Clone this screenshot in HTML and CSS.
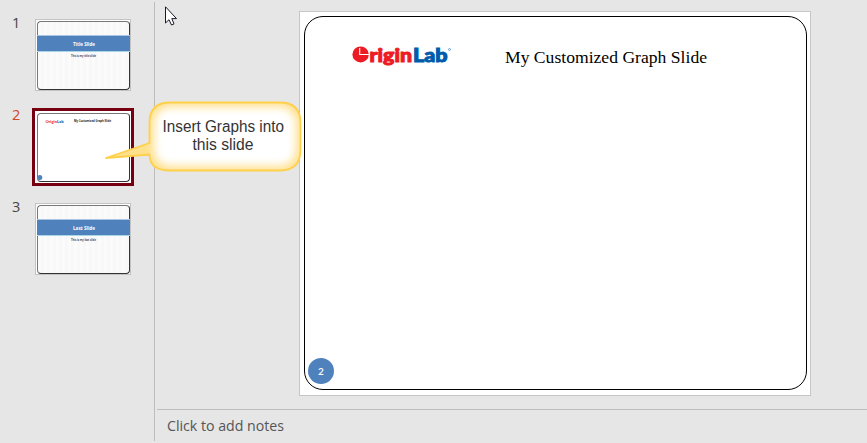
FILE: index.html
```html
<!DOCTYPE html>
<html lang="en">
<head>
<meta charset="utf-8">
<title>Slides</title>
<link rel="stylesheet" href="styles.css">
</head>
<body>
<div class="app">
  <aside class="sidebar">
    <div class="entry">
      <span class="num">1</span>
      <div class="thumb"><div class="page lined">
        <div class="band"><svg width="30" height="12"><text x="4" y="8" textLength="22" lengthAdjust="spacingAndGlyphs" class="band-text">Title Slide</text></svg></div>
        <svg class="sub" width="31" height="8"><text x="3" y="4.500" textLength="25" lengthAdjust="spacingAndGlyphs" class="sub-text">This is my title slide</text></svg>
      </div></div>
    </div>
    <div class="entry">
      <span class="num active">2</span>
      <div class="thumb selected"><div class="page">
        <svg class="mini" width="91" height="67">
          <text x="7.500" y="8.500" textLength="18" lengthAdjust="spacingAndGlyphs" class="mini-logo red">Origin<tspan class="blue">Lab</tspan></text>
          <text x="36" y="8" textLength="37" lengthAdjust="spacingAndGlyphs" class="mini-title">My Customized Graph Slide</text>
          <circle cx="1.800" cy="63.500" r="2.500" class="dot"/>
        </svg>
      </div></div>
    </div>
    <div class="entry">
      <span class="num">3</span>
      <div class="thumb"><div class="page lined">
        <div class="band"><svg width="30" height="12"><text x="4" y="8" textLength="22" lengthAdjust="spacingAndGlyphs" class="band-text">Last Slide</text></svg></div>
        <svg class="sub" width="31" height="8"><text x="3" y="4.500" textLength="25" lengthAdjust="spacingAndGlyphs" class="sub-text">This is my last slide</text></svg>
      </div></div>
    </div>
  </aside>
  <main class="main">
    <section class="stage">
      <div class="slide"><div class="frame">
        <header class="head">
          <svg class="logo" width="102" height="28" viewBox="0 0 102 28">
            <ellipse cx="9.600" cy="11.400" rx="8.200" ry="8" class="red"/>
            <path d="M8.700 5v6.500h9.500" class="logo-cut"/>
            <text x="18.500" y="19" textLength="42.500" lengthAdjust="spacingAndGlyphs" class="logo-text logo-red">rigin</text>
            <text x="62" y="19" textLength="34.500" lengthAdjust="spacingAndGlyphs" class="logo-text logo-blue">Lab</text>
            <circle cx="98.500" cy="6.500" r="1" class="blue-ring"/>
          </svg>
          <svg class="title" width="206" height="30"><text x="1" y="19.500" textLength="202" lengthAdjust="spacingAndGlyphs" class="title-text">My Customized Graph Slide</text></svg>
        </header>
        <div class="number">2</div>
      </div></div>
    </section>
    <footer class="notes"><svg width="124" height="28"><text x="0" y="17" textLength="117" lengthAdjust="spacingAndGlyphs" class="notes-text">Click to add notes</text></svg></footer>
  </main>
  <svg class="callout" width="200" height="76" viewBox="104 98 200 76">
    <defs>
      <filter id="soft" x="-20%" y="-30%" width="140%" height="160%"><feGaussianBlur stdDeviation="4"/></filter>
      <clipPath id="shape"><path d="M170 102.500H280Q300.500 102.500 300.500 123V150Q300.500 170.500 280 170.500H170Q149.500 170.500 149.500 154.500L106 158L149.500 143V123Q149.500 102.500 170 102.500Z"/></clipPath>
    </defs>
    <g clip-path="url(#shape)">
      <path d="M104 98H304V174H104Z" class="glow"/>
      <rect x="154" y="107" width="142" height="59" rx="16" class="core" filter="url(#soft)"/>
    </g>
    <path d="M170 102.500H280Q300.500 102.500 300.500 123V150Q300.500 170.500 280 170.500H170Q149.500 170.500 149.500 154.500L106 158L149.500 143V123Q149.500 102.500 170 102.500Z" class="edge"/>
    <text x="162.500" y="132" textLength="121.500" lengthAdjust="spacingAndGlyphs" class="callout-text">Insert Graphs into</text>
    <text x="192.500" y="150" textLength="61" lengthAdjust="spacingAndGlyphs" class="callout-text">this slide</text>
  </svg>
  <svg class="cursor" width="14" height="22" viewBox="0 0 14 22"><path d="M1.500 .8V17L5 13.700L7.500 19L10 17.900L7.800 12.600H12.500Z"/></svg>
</div>
</body>
</html>
```
FILE: styles.css
```css
* { box-sizing: border-box; }
body { margin: 0; background: #e6e6e6; font-family: "Open Sans", sans-serif; }
svg { display: block; }
.app { position: relative; display: flex; width: 867px; height: 443px; overflow: hidden; }
.sidebar { width: 155px; height: 439px; margin-top: 2px; padding-top: 14px; border-right: 1px solid #bdbdbd; }
.entry { display: flex; height: 92px; padding-left: 12px; }
.num { width: 23px; margin-top: -1px; font: 14.500px/16px "Open Sans", sans-serif; color: #444; }
.num.active { color: #d24726; }
.thumb { width: 96px; height: 72px; margin-top: 3px; padding: 1px; border: 1px solid #c3c3c3; background: #fff; }
.thumb.selected { width: 102px; height: 78px; margin: 0 0 0 -3px; padding: 2px; border: 3px solid #76000f; }
.page { width: 93px; height: 69px; border: 1px solid #333; border-top-color: #777; border-left-color: #777; border-radius: 4px; background: #fff; }
.lined { background: repeating-linear-gradient(90deg, #fbfbfb 0 3px, #f8f8f8 3px 6px); }
.band { display: flex; justify-content: center; align-items: center; width: 93px; height: 17px; margin: 13px 0 0 -1px; background: #4f81bd; border-top: 1px solid #a9c5e2; border-bottom: 1px solid #a9d5e8; }
.band-text { font: bold 5.500px "Open Sans", sans-serif; fill: #fff; }
.sub { margin: 0 auto; }
.sub-text { font: bold 3.500px "Open Sans", sans-serif; fill: #3a4b70; }
.red { fill: #ed1c24; }
.blue { fill: #005baa; }
.dot { fill: #4f81bd; }
.mini-logo { font: 900 4.500px Lato, sans-serif; }
.mini-title { font: bold 3.800px "Open Sans", sans-serif; fill: #222; }
.main { flex: 1; display: flex; flex-direction: column; padding-left: 2px; }
.stage { height: 409px; padding: 11px 0 0 142px; }
.slide { width: 512px; height: 385px; padding: 4px; border: 1px solid #c6c6c6; background: #fff; }
.frame { display: flex; flex-direction: column; justify-content: space-between; width: 503px; height: 374px; padding: 26px 0 5px 3px; border: 1px solid #000; border-radius: 19px; }
.head { display: flex; padding-left: 43px; }
.title { margin-left: 51px; }
.logo-text { font: 900 19px Lato, sans-serif; stroke-width: 1; }
.logo-red { fill: #ed1c24; stroke: #ed1c24; }
.logo-blue { fill: #005baa; stroke: #005baa; }
.logo-cut { fill: none; stroke: #fff; stroke-width: 1.100; }
.blue-ring { fill: none; stroke: #005baa; stroke-width: .5; }
.title-text { font: 17.500px "Liberation Serif", serif; fill: #000; }
.number { width: 26px; height: 26px; border-radius: 50%; background: #4f81bd; color: #fff; font: 600 10px/26px Lato, sans-serif; text-align: center; }
.notes { height: 34px; padding: 4px 0 0 9.500px; border-top: 1px solid #bdbdbd; }
.notes-text { font: 14.500px "Open Sans", sans-serif; fill: #555; }
.callout { position: absolute; left: 104px; top: 98px; }
.glow { fill: #ffe08c; }
.core { fill: #fff; }
.edge { fill: none; stroke: #ffd04a; stroke-width: 1.800; stroke-linejoin: round; }
.callout-text { font: 16px "Liberation Sans", sans-serif; fill: #333; }
.cursor { position: absolute; left: 164px; top: 6px; fill: #fff; stroke: #1a1a2a; stroke-width: 1; }
```
